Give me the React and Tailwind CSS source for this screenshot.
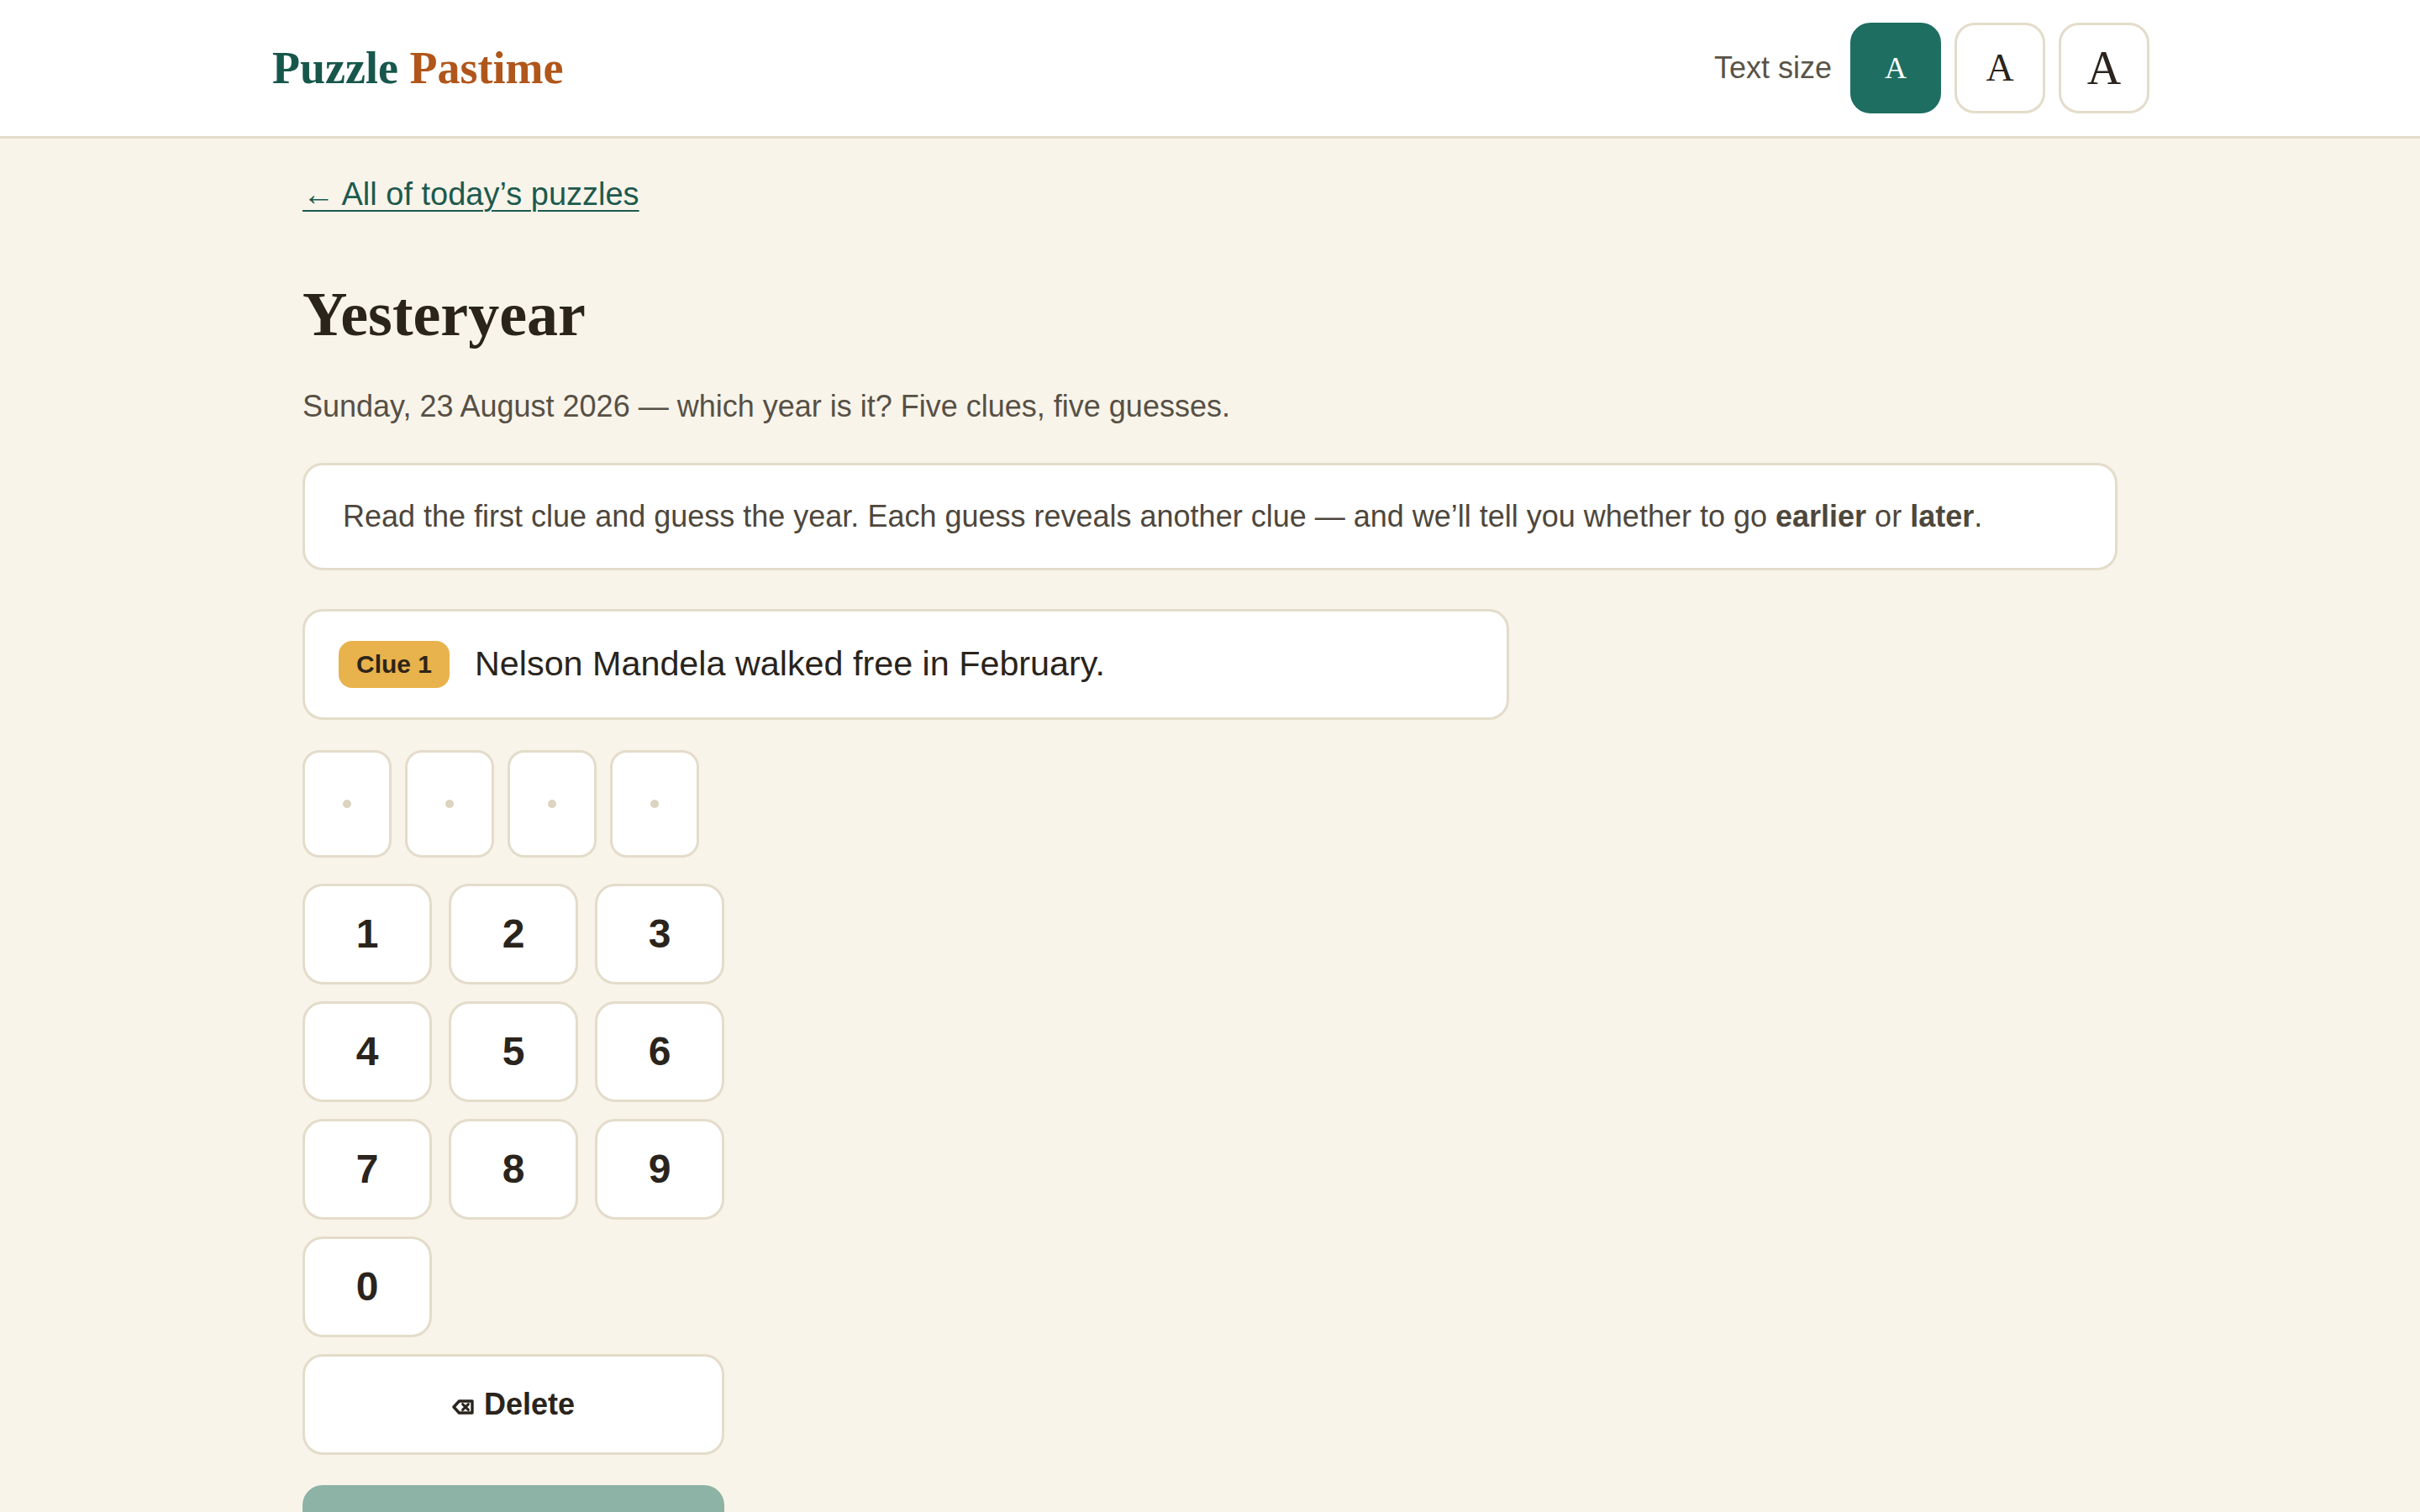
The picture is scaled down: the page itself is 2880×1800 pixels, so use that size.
import React, { useState } from "react";

const SERIF = "font-['Liberation_Serif','Times_New_Roman',serif]";
const SANS = "font-['Liberation_Sans',Arial,sans-serif]";

const sizes = [
  { id: "s", cls: "text-[36px]" },
  { id: "m", cls: "text-[46px]" },
  { id: "l", cls: "text-[56px]" },
];

const DeleteIcon = () => (
  <svg width="26" height="18" viewBox="0 0 13 9" className="mr-[12px] mt-[6px]" aria-hidden="true">
    <path d="M1 4.5 L4.2 1 H12 V8 H4.2 Z" fill="none" stroke="currentColor" strokeWidth="1.7" strokeLinejoin="round" />
    <path d="M6.3 2.8 L9.7 6.2 M9.7 2.8 L6.3 6.2" stroke="currentColor" strokeWidth="1.5" strokeLinecap="round" />
  </svg>
);

export default function App() {
  const [textSize, setTextSize] = useState("s");
  const [digits, setDigits] = useState([]);

  const press = (d) => {
    if (digits.length < 4) setDigits([...digits, d]);
  };
  const del = () => setDigits(digits.slice(0, -1));

  return (
    <div className={`min-h-screen bg-[#f8f4ea] text-[#2a241c] ${SANS}`}>
      {/* Header */}
      <header className="bg-white border-b-[3px] border-[#e4dcca]">
        <div className="max-w-[2240px] mx-auto h-[162px] flex items-center justify-between pl-[4px] pr-[2px]">
          <div className={`${SERIF} font-bold text-[54px] leading-none`}>
            <span className="text-[#17574b]">Puzzle</span>{" "}
            <span className="text-[#b0561b]">Pastime</span>
          </div>
          <div className="flex items-center">
            <span className="text-[36px] text-[#5a5347] mr-[22px]">Text size</span>
            <div className="flex gap-4">
              {sizes.map((s) => (
                <button
                  key={s.id}
                  onClick={() => setTextSize(s.id)}
                  className={`${SERIF} ${s.cls} w-[108px] h-[108px] rounded-[24px] border-[3px] flex items-center justify-center leading-none ${
                    textSize === s.id
                      ? "bg-[#1e6e62] border-[#1e6e62] text-white"
                      : "bg-white border-[#e4dcca] text-[#2a241c]"
                  }`}
                >
                  A
                </button>
              ))}
            </div>
          </div>
        </div>
      </header>

      {/* Main */}
      <main className="max-w-[2160px] mx-auto pt-[38px] pb-32">
        <a
          href="#"
          className="text-[38px] leading-[1.5] text-[#1d5a4e] underline underline-offset-[6px] decoration-[2px]"
        >
          ← All of today’s puzzles
        </a>

        <h1 className={`${SERIF} font-bold text-[74px] leading-[1.2] text-[#2b241a] mt-[70px]`}>
          Yesteryear
        </h1>

        <p className="text-[36px] leading-[1.5] text-[#575045] mt-[38px]">
          Sunday, 23 August 2026 — which year is it? Five clues, five guesses.
        </p>

        <div className="mt-[40px] bg-white border-[3px] border-[#e4dcca] rounded-[24px] px-[45px] py-[34px] text-[36px] leading-[1.5] text-[#4e473c]">
          Read the first clue and guess the year. Each guess reveals another clue — and we’ll tell you whether to go{" "}
          <strong className="font-bold">earlier</strong> or <strong className="font-bold">later</strong>.
        </div>

        <div className="mt-[46px] w-[1436px] bg-white border-[3px] border-[#e4dcca] rounded-[24px] px-[40px] py-[32px] flex items-center gap-[30px]">
          <span className="bg-[#e8b24c] text-[#2d2418] font-bold text-[30px] leading-none rounded-[16px] px-[21px] h-[56px] flex items-center">
            Clue 1
          </span>
          <span className="text-[41.3px] leading-[1.5] text-[#2a241c]">Nelson Mandela walked free in February.</span>
        </div>

        {/* Guess slots */}
        <div className="mt-[36px] flex gap-4">
          {[0, 1, 2, 3].map((i) => (
            <div
              key={i}
              className="w-[106px] h-[128px] bg-white border-[3px] border-[#e4dcca] rounded-[20px] flex items-center justify-center text-[52px] font-bold"
            >
              {digits[i] ?? <span className="w-[10px] h-[10px] rounded-full bg-[#dcd3c0]" />}
            </div>
          ))}
        </div>

        {/* Keypad */}
        <div className="mt-[31px] w-[502px] grid grid-cols-3 gap-[20px]">
          {["1", "2", "3", "4", "5", "6", "7", "8", "9", "0"].map((d) => (
            <button
              key={d}
              onClick={() => press(d)}
              className="h-[120px] bg-white border-[3px] border-[#e4dcca] rounded-[24px] text-[48px] font-bold text-[#2a241c]"
            >
              {d}
            </button>
          ))}
          <button
            onClick={del}
            className="col-span-3 h-[120px] bg-white border-[3px] border-[#e4dcca] rounded-[24px] text-[36px] font-bold text-[#2a241c] flex items-center justify-center"
          >
            <DeleteIcon />
            Delete
          </button>
        </div>

        <button
          disabled={digits.length < 4}
          className="mt-[36px] w-[502px] h-[120px] rounded-[24px] bg-[#8db3a6] text-white text-[36px] font-bold"
        >
          Guess
        </button>
      </main>
    </div>
  );
}
